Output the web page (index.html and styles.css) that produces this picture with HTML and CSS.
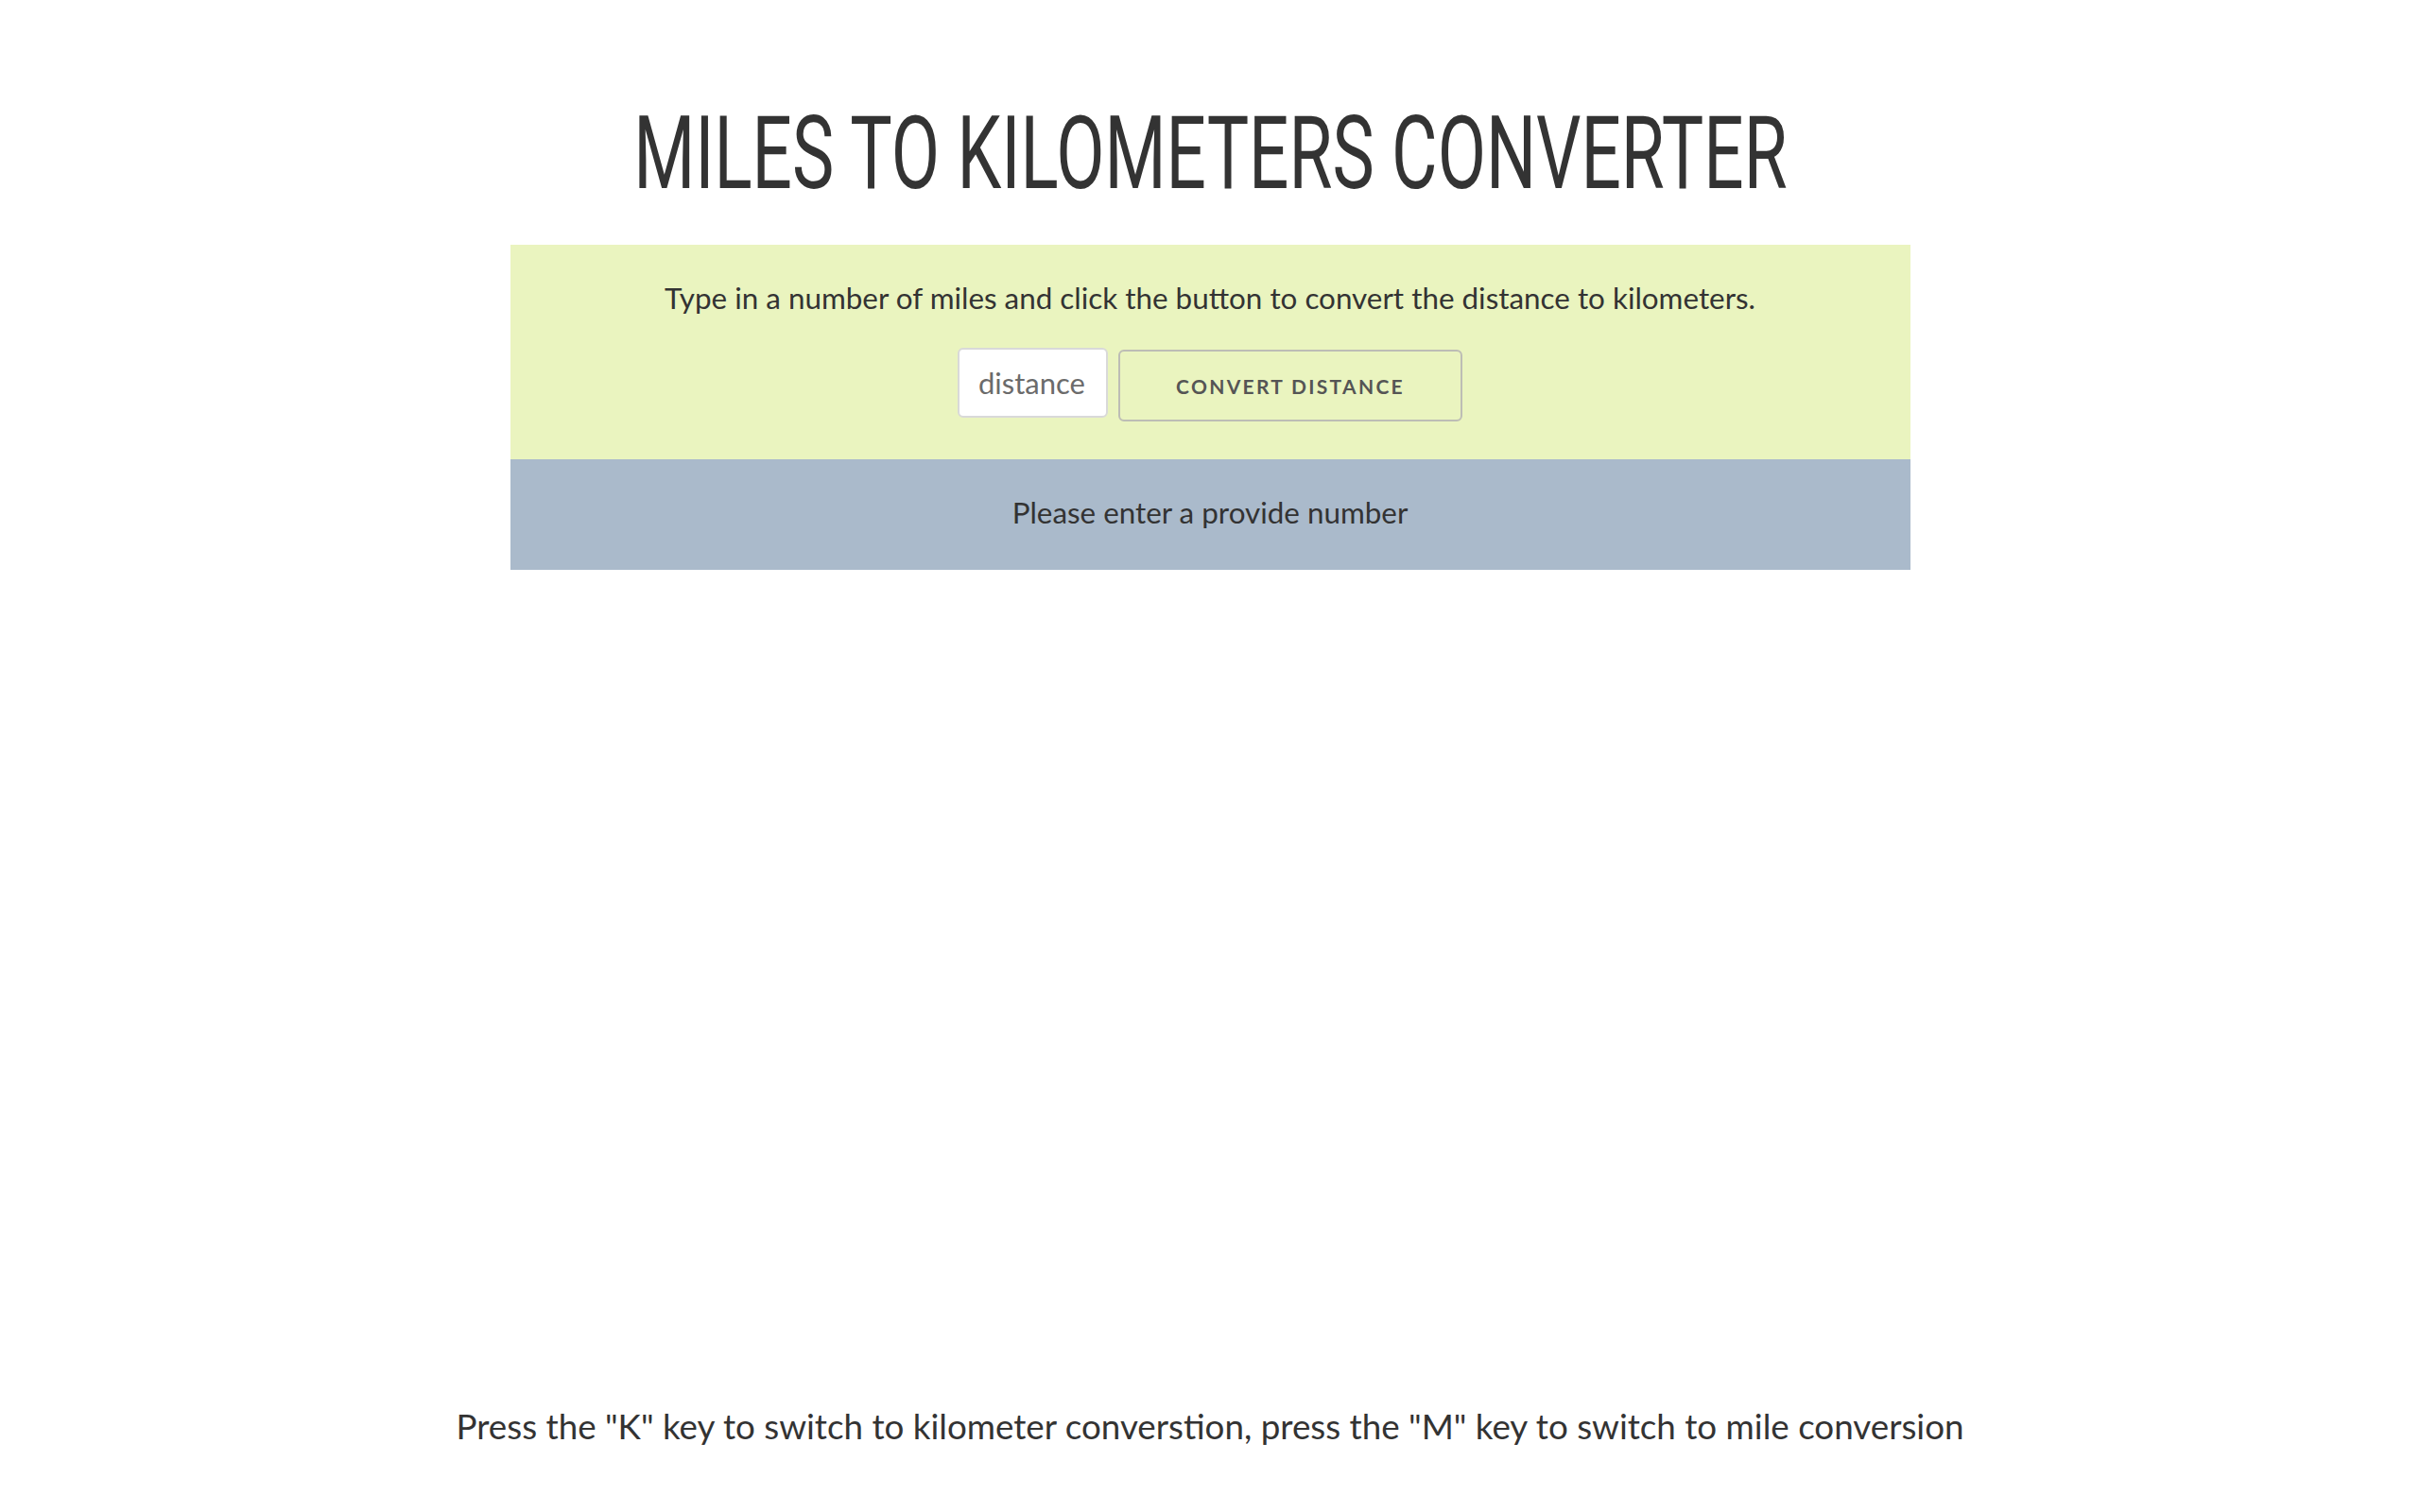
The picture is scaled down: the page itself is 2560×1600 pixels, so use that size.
FILE: index.html
```html
<!DOCTYPE html>
<html lang="en">
<head>
<meta charset="utf-8">
<title>Miles to Kilometers Converter</title>
<link rel="stylesheet" href="styles.css">
</head>
<body>
<div class="page">
  <h1 class="title"><span class="title-text">MILES TO KILOMETERS CONVERTER</span></h1>
  <main class="converter">
    <section class="panel panel-input">
      <p class="instructions">Type in a number of miles and click the button to convert the distance to kilometers.</p>
      <form class="controls">
        <input class="distance" type="text" placeholder="distance">
        <button class="convert" type="button">CONVERT DISTANCE</button>
      </form>
    </section>
    <section class="panel panel-result">
      <p class="result">Please enter a provide number</p>
    </section>
  </main>
  <footer class="hint">Press the "K" key to switch to kilometer converstion, press the "M" key to switch to mile conversion</footer>
</div>
</body>
</html>
```

FILE: styles.css
```css
html, body {
  margin: 0;
  padding: 0;
  background: #ffffff;
}

body {
  font-family: Lato, "Open Sans", sans-serif;
  color: #333333;
}

.page {
  min-height: 100vh;
  display: flex;
  flex-direction: column;
  align-items: center;
}

.title {
  margin: 108px 0 43px;
  font-family: Roboto, "Liberation Sans", sans-serif;
  font-weight: 400;
  font-size: 108px;
  line-height: 108px;
  height: 108px;
  color: #333333;
  text-align: center;
  white-space: nowrap;
}

.title-text {
  display: inline-block;
  transform: scaleX(0.69);
  transform-origin: center;
}

.converter {
  width: 1481px;
}

.panel {
  text-align: center;
}

.panel-input {
  background: #eaf4bf;
  padding: 37px 0 40px;
}

.instructions {
  margin: 0 0 34px;
  font-size: 31.4px;
  line-height: 38px;
}

.controls {
  display: flex;
  justify-content: center;
  align-items: flex-start;
  gap: 11px;
  margin: 0;
}

.distance {
  box-sizing: border-box;
  width: 159px;
  height: 74px;
  padding: 0 20px;
  border: 2px solid #d9d9d9;
  border-radius: 6px;
  background: #ffffff;
  font-family: Lato, "Open Sans", sans-serif;
  font-size: 31px;
  color: #333333;
  outline: none;
}

.distance::placeholder {
  color: #6b6b6b;
}

.convert {
  box-sizing: border-box;
  width: 364px;
  height: 76px;
  margin-top: 2px;
  border: 2px solid #bdbdb5;
  border-radius: 6px;
  background: transparent;
  font-family: Lato, "Open Sans", sans-serif;
  font-weight: 700;
  font-size: 21px;
  letter-spacing: 2.3px;
  color: #555555;
  cursor: pointer;
}

.panel-result {
  background: #aabacb;
  padding: 38px 0 43px;
}

.result {
  margin: 0;
  font-size: 31.4px;
  line-height: 36px;
}

.hint {
  margin-top: auto;
  padding-bottom: 69px;
  font-size: 36.75px;
  line-height: 43px;
  text-align: center;
}
```
